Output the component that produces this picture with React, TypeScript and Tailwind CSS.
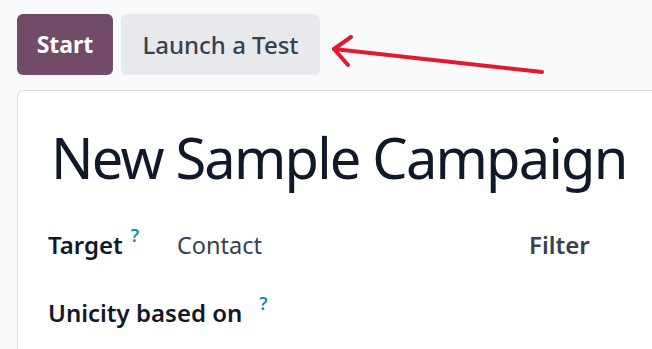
export default function App() {
  return (
    <div
      className="relative h-[349px] w-[652px] overflow-hidden bg-[#f9fafb]"
      style={{ fontFamily: '"Noto Sans", "Open Sans", sans-serif' }}
    >
      <div className="flex gap-[8px] pl-[17px] pt-[14px]">
        <button className="h-[61px] w-[96px] rounded-[6px] bg-[#714b67] text-[23px] font-bold text-white">
          Start
        </button>
        <button className="h-[61px] w-[199px] rounded-[6px] bg-[#e7e9ed] text-[24px] font-medium text-[#374151]">
          Launch a Test
        </button>
      </div>

      {/* arrow overlay */}
      <svg
        className="absolute left-[330px] top-[32px]"
        width="220"
        height="50"
        viewBox="0 0 220 50"
        fill="none"
        stroke="#e3192f"
        strokeWidth="4"
        strokeLinecap="round"
        strokeLinejoin="round"
      >
        <path d="M4 17 L212 40" />
        <path d="M21 5 L4 17 L18 33" />
      </svg>

      <div className="ml-[17px] mt-[15px] h-[300px] rounded-tl-[6px] border border-r-0 border-[#d8dadd] bg-white pl-[30px]">
        <h1 className="ml-[3px] mt-[34px] whitespace-nowrap text-[56px] leading-[64px] tracking-[-1.8px] text-[#111827]">
          New Sample Campaign
        </h1>
        <div className="mt-[40px] flex items-baseline text-[24px] leading-[32px]">
          <div className="w-[129px] font-semibold text-[#111827]">
            Target
            <sup className="top-[-12px] ml-[8px] text-[18px] font-semibold text-[#1a8cb0]">?</sup>
          </div>
          <div className="w-[352px] text-[23.5px] text-[#374151]">Contact</div>
          <div className="font-semibold text-[#374151]">Filter</div>
        </div>
        <div className="mt-[36px] flex items-baseline text-[24px] leading-[32px] font-semibold text-[#111827]">
          Unicity based on
          <sup className="top-[-12px] ml-[17px] text-[18px] font-semibold text-[#1a8cb0]">?</sup>
        </div>
      </div>
    </div>
  );
}
